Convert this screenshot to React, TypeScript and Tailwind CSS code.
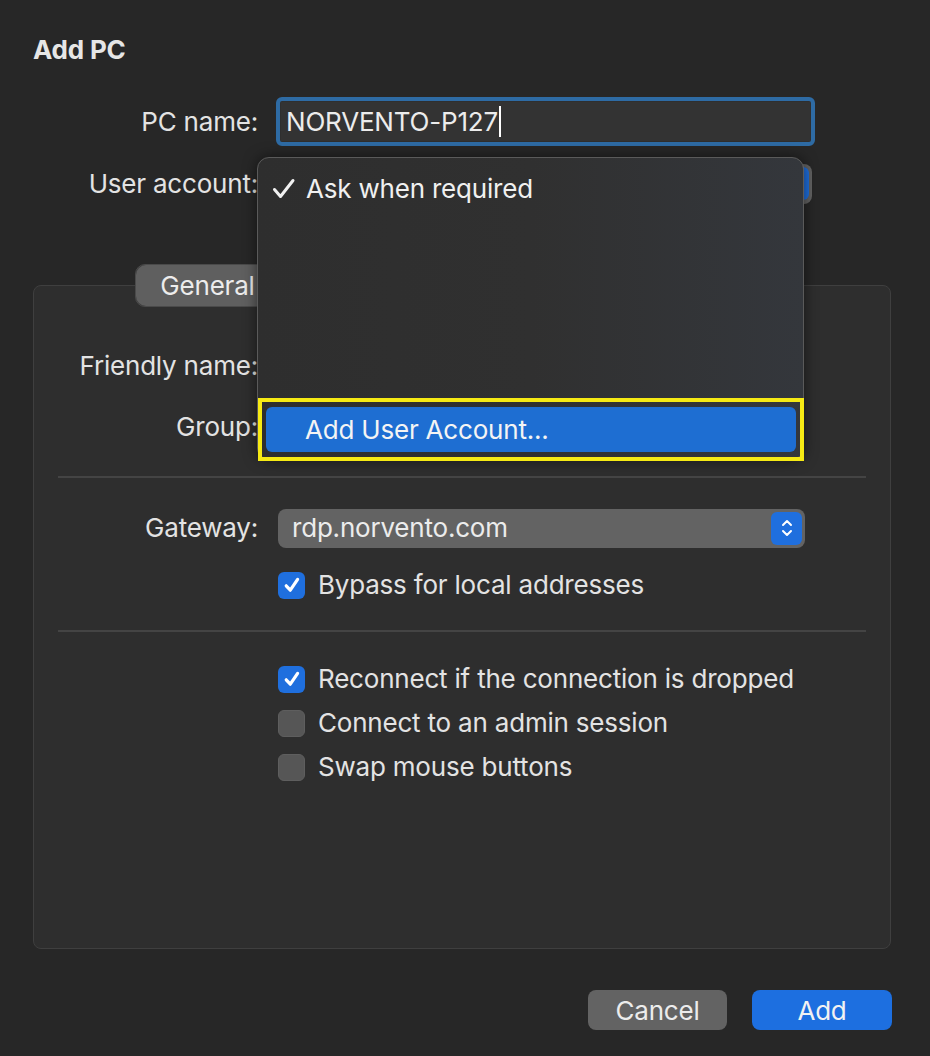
import React from "react";

function Check({ checked }: { checked: boolean }) {
  return checked ? (
    <div className="w-[27px] h-[27px] rounded-[6px] bg-[#1f6fde] flex items-center justify-center shrink-0">
      <svg width="20" height="20" viewBox="0 0 20 20">
        <path d="M4.2 10.8 L8.3 15.2 L15.6 4.4" fill="none" stroke="#ffffff" strokeWidth="3.2" strokeLinecap="round" strokeLinejoin="round" />
      </svg>
    </div>
  ) : (
    <div className="w-[27px] h-[27px] rounded-[6px] bg-[#565656] border border-[#5e5e5e] shrink-0" />
  );
}

function Stepper({ className }: { className: string }) {
  return (
    <div className={"w-[31px] h-[33px] rounded-[6px] bg-[#1f6fde] flex items-center justify-center " + className}>
      <svg width="14" height="26" viewBox="0 0 14 26">
        <path d="M3 10 L7 6 L11 10" fill="none" stroke="#fff" strokeWidth="2" strokeLinecap="round" strokeLinejoin="round" />
        <path d="M3 16 L7 20 L11 16" fill="none" stroke="#fff" strokeWidth="2" strokeLinecap="round" strokeLinejoin="round" />
      </svg>
    </div>
  );
}

export default function App() {
  return (
    <div
      className="relative w-[930px] h-[1056px] bg-[#272727] overflow-hidden text-[#e3e3e3] text-[26px] tracking-[-0.2px]"
      style={{ fontFamily: "Inter, 'Noto Sans', sans-serif" }}
    >
      {/* Title */}
      <div className="pt-[34px] pl-[33px] h-[66px] leading-[32px] font-bold text-[#e6e6e6]">Add PC</div>

      {/* PC name */}
      <div className="mt-[31px] flex items-center h-[49px]">
        <div className="w-[258px] text-right leading-[32px]">PC name:</div>
        <div className="ml-[18px] w-[539px] h-[49px] rounded-[6px] border-[4px] border-[#2e6ba4] bg-[#2f2f2f] p-[1px]">
          <div className="h-full bg-[#333333] flex items-center pl-[5px] leading-[32px] text-[#ececec]">
            <span>NORVENTO-P127</span>
            <span className="ml-[1px] w-[2px] h-[31px] bg-white" />
          </div>
        </div>
      </div>

      {/* User account */}
      <div className="mt-[18px] flex items-center h-[40px]">
        <div className="w-[258px] text-right leading-[32px]">User account:</div>
        <div className="ml-[20px] w-[534px] h-[40px] rounded-[8px] bg-[#626262] relative">
          <Stepper className="absolute right-[3px] top-[3px]" />
        </div>
      </div>

      {/* Tabs */}
      <div className="relative z-10 mt-[60px] ml-[33px] mr-[39px] flex justify-center">
        <div className="flex h-[43px] rounded-[10px] bg-[#3b3b3b] border border-[#4a4a4a] w-[654px]">
          <div className="w-[143px] rounded-[10px] bg-[#5f5f5f] flex items-center justify-center leading-[32px] text-[#ececec]">General</div>
          <div className="flex-1" />
        </div>
      </div>

      {/* Box */}
      <div className="-mt-[22px] ml-[33px] mr-[39px] h-[664px] rounded-[8px] border border-[#3f3f3f] bg-[#2e2e2e] px-[24px] pt-[60px]">
        <div className="flex items-center h-[40px]">
          <div className="w-[200px] text-right leading-[32px]">Friendly name:</div>
          <div className="ml-[20px] w-[500px] h-[40px] rounded-[6px] bg-[#3a3a3a]" />
        </div>
        <div className="mt-[21px] flex items-center h-[40px]">
          <div className="w-[200px] text-right leading-[32px]">Group:</div>
          <div className="ml-[20px] w-[500px] h-[40px] rounded-[6px] bg-[#626262]" />
        </div>
        <div className="mt-[29px] h-[2px] bg-[#444444]" />
        <div className="mt-[30px] flex items-center h-[40px]">
          <div className="w-[200px] text-right leading-[32px]">Gateway:</div>
          <div className="ml-[20px] w-[527px] h-[39px] rounded-[8px] bg-[#636363] relative flex items-center pl-[14px] leading-[32px] text-[#ececec]">
            <span>rdp.norvento.com</span>
            <Stepper className="absolute right-[3px] top-[3px]" />
          </div>
        </div>
        <div className="mt-[23px] ml-[220px] flex items-center gap-[13px] h-[28px]">
          <Check checked />
          <span className="leading-[32px]">Bypass for local addresses</span>
        </div>
        <div className="mt-[31px] h-[2px] bg-[#444444]" />
        <div className="mt-[33px] ml-[220px] flex items-center gap-[13px] h-[28px]">
          <Check checked />
          <span className="leading-[32px]">Reconnect if the connection is dropped</span>
        </div>
        <div className="mt-[16px] ml-[220px] flex items-center gap-[13px] h-[28px]">
          <Check checked={false} />
          <span className="leading-[32px]">Connect to an admin session</span>
        </div>
        <div className="mt-[16px] ml-[220px] flex items-center gap-[13px] h-[28px]">
          <Check checked={false} />
          <span className="leading-[32px]">Swap mouse buttons</span>
        </div>
      </div>

      {/* Buttons */}
      <div className="mt-[41px] flex justify-end gap-[25px] pr-[38px]">
        <div className="w-[139px] h-[40px] rounded-[8px] bg-[#636363] flex items-center justify-center text-[#ececec]">Cancel</div>
        <div className="w-[140px] h-[40px] rounded-[8px] bg-[#1d6fe0] flex items-center justify-center text-[#f2f2f2]">Add</div>
      </div>

      {/* Dropdown menu */}
      <div className="absolute left-[257px] top-[157px] w-[547px] h-[303px] rounded-[12px] border border-[#5a5a5a] bg-gradient-to-r from-[#2e2e2e] via-[#303030] to-[#34373c] shadow-[0_0_14px_rgba(0,0,0,0.55)] z-20">
        <div className="flex items-center h-[60px] pl-[14px] pt-[1px] text-[#f0f0f0]">
          <svg width="34" height="24" viewBox="0 0 34 24" className="shrink-0">
            <path d="M2.5 12.5 L8.5 19.5 L21 3.5" fill="none" stroke="#f0f0f0" strokeWidth="3" strokeLinecap="round" strokeLinejoin="round" />
          </svg>
          <span className="leading-[32px]">Ask when required</span>
        </div>
        <div className="absolute left-[0px] top-[240px] w-[546px] h-[63px] border-[4px] border-[#f6ea14] px-[4px] pt-[5px]">
          <div className="h-[45px] rounded-[6px] bg-[#1e6ed2] flex items-center pl-[39px] leading-[32px] text-[#f4f4f4]">
            Add User Account...
          </div>
        </div>
      </div>
    </div>
  );
}
